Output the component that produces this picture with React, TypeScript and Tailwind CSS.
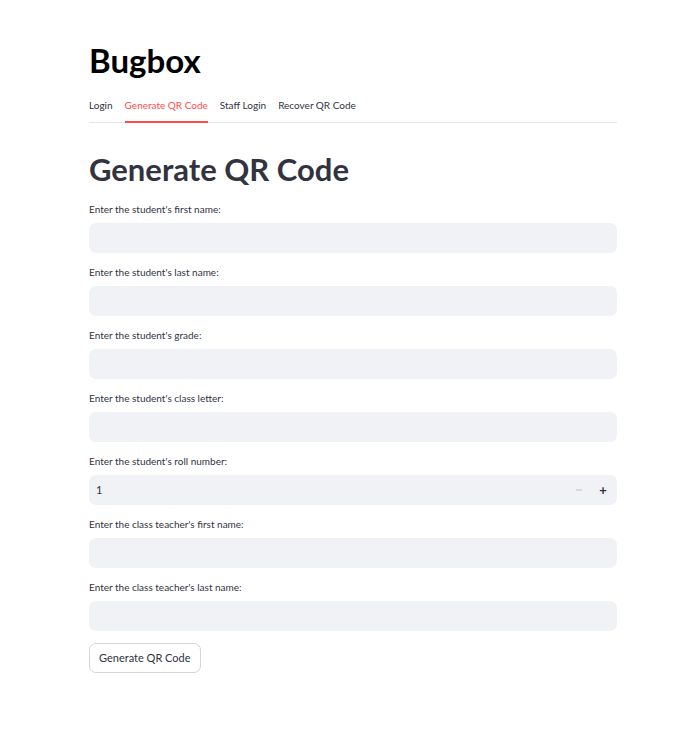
import React from 'react';

const fields = [
    "Enter the student's first name:",
    "Enter the student's last name:",
    "Enter the student's grade:",
    "Enter the student's class letter:",
    "Enter the student's roll number:",
    "Enter the class teacher's first name:",
    "Enter the class teacher's last name:",
];

const tabs = ['Login', 'Generate QR Code', 'Staff Login', 'Recover QR Code'];

export default function App() {
    return (
        <div className="min-h-screen bg-white font-['Lato',sans-serif] text-[#31333F]">
            <div className="ml-[89px] w-[528px] pt-[40px] pb-16 flex flex-col">
                <h1 className="text-[33px] font-bold text-black leading-[40px]">Bugbox</h1>

                {/* Tabs */}
                <div className="mt-[17px] flex gap-3 border-b border-[#e6e6ea]">
                    {tabs.map((t, i) => (
                        <div
                            key={t}
                            className={
                                i === 1
                                    ? 'pb-[8px] text-[10px] leading-[16px] text-[#FF4B4B] border-b-2 border-[#FF4B4B] -mb-px'
                                    : 'pb-[8px] text-[10px] leading-[16px] text-[#31333F]'
                            }
                        >
                            {t}
                        </div>
                    ))}
                </div>

                <h2 className="mt-[24px] text-[31px] font-bold leading-[44px] text-[#31333F]">Generate QR Code</h2>

                <div className="mt-[11px] flex flex-col gap-[12px]">
                    {fields.map((f, i) => (
                        <div key={f} className="flex flex-col">
                            <label className="text-[10px] leading-[14px] text-[#31333F]">{f}</label>
                            <div className="mt-[7px] h-[30px] rounded-[7px] bg-[#F0F2F6] flex items-center pl-[7px] pr-[2px]">
                                {i === 4 && (
                                    <>
                                        <span className="text-[11px] flex-1">1</span>
                                        <span className="w-[24px] flex items-center justify-center">
                                            <span className="block w-[6px] h-[1.5px] bg-[#d5d8de]" />
                                        </span>
                                        <span className="w-[24px] flex items-center justify-center text-[13px] font-bold text-[#31333F] leading-none">
                                            +
                                        </span>
                                    </>
                                )}
                            </div>
                        </div>
                    ))}
                </div>

                <div className="mt-[12px]">
                    <button className="h-[30px] px-[9px] rounded-[7px] border border-[#d6d6d9] bg-white text-[11px] text-[#31333F]">
                        Generate QR Code
                    </button>
                </div>
            </div>
        </div>
    );
}
